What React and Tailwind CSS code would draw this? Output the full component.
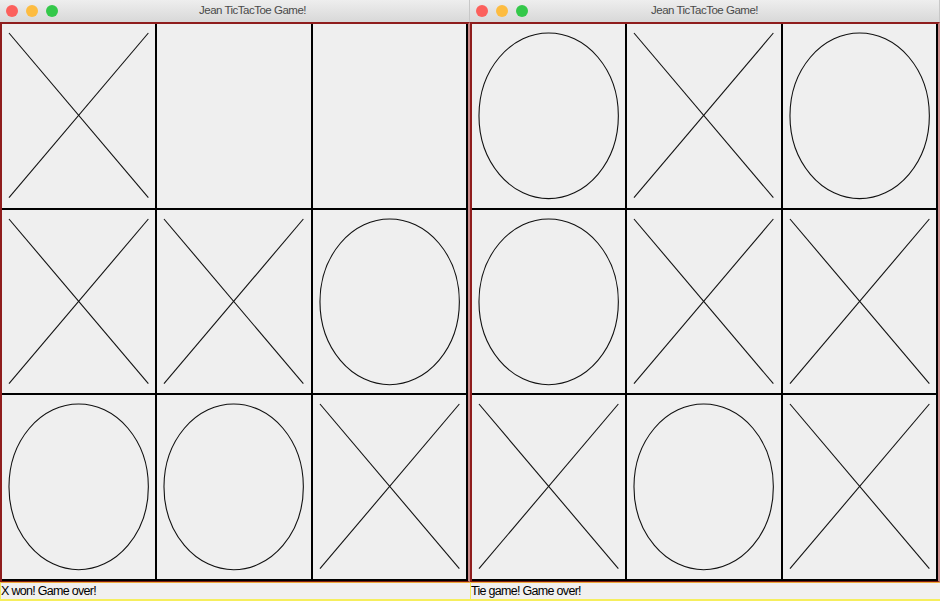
import React from 'react';

const boards = [
  {
    status: 'X won! Game over!',
    cells: ['X', '', '', 'X', 'X', 'O', 'O', 'O', 'X'],
    titleShift: 'ml-[36px]',
  },
  {
    status: 'Tie game! Game over!',
    cells: ['O', 'X', 'O', 'O', 'X', 'X', 'X', 'O', 'X'],
    titleShift: '',
  },
];

function Mark({ value }) {
  if (!value) return null;
  return (
    <svg className="w-full h-full block" viewBox="0 0 154 184" preserveAspectRatio="none">
      {value === 'X' ? (
        <>
          <line x1="7" y1="9" x2="147" y2="174" stroke="#111" strokeWidth="1.1" />
          <line x1="147" y1="9" x2="7" y2="174" stroke="#111" strokeWidth="1.1" />
        </>
      ) : (
        <ellipse cx="77" cy="92" rx="70" ry="83" fill="none" stroke="#111" strokeWidth="1.1" />
      )}
    </svg>
  );
}

function GameWindow({ status, cells, titleShift }) {
  return (
    <div className="w-[470px] h-[601px] flex flex-col bg-[#ececec]">
      <div className="h-[22px] relative flex items-center justify-center bg-gradient-to-b from-[#eeeeee] to-[#d8d8d8] border-r border-[#c8c8c8]">
        <div className="absolute left-[6px] top-[5px] flex gap-[8px]">
          <span className="w-[12px] h-[12px] rounded-full bg-[#fc605c]" />
          <span className="w-[12px] h-[12px] rounded-full bg-[#fdbc40]" />
          <span className="w-[12px] h-[12px] rounded-full bg-[#34c84a]" />
        </div>
        <span className={`${titleShift} text-[11.5px] tracking-[-0.5px] text-[#4a4a4a] font-['Liberation_Sans',sans-serif]`}>
          Jean TicTacToe Game!
        </span>
      </div>
      <div className="flex-1 border-l-2 border-t-2 border-b border-r-2 border-l-[#8f1d1d] border-t-[#8f1d1d] border-b-[#7a1a10] border-r-[#c98888]">
        <div className="h-full grid grid-cols-3 grid-rows-3 gap-[2px] bg-black pr-[2px] pb-[2px]">
          {cells.map((c, i) => (
            <div key={i} className="bg-[#efefef]">
              <Mark value={c} />
            </div>
          ))}
        </div>
      </div>
      <div className="h-[19px] bg-[#f1f0ef] border-t border-t-[#f2a93b] border-b-2 border-b-[#f6ee5c] border-l border-l-[#f6ee5c] flex items-center">
        <span className="text-[12.5px] leading-none tracking-[-0.7px] text-black font-['Liberation_Sans',sans-serif]">
          {status}
        </span>
      </div>
    </div>
  );
}

export default function App() {
  return (
    <div className="w-[940px] h-[601px] flex overflow-hidden">
      {boards.map((b, i) => (
        <GameWindow key={i} status={b.status} cells={b.cells} titleShift={b.titleShift} />
      ))}
    </div>
  );
}
